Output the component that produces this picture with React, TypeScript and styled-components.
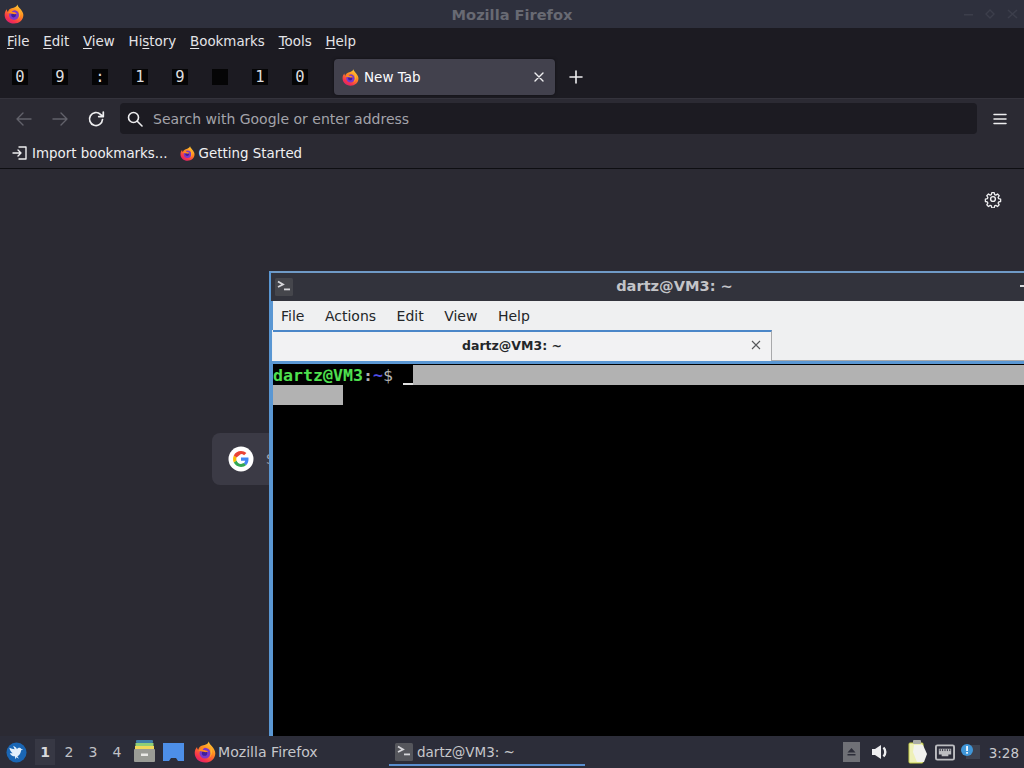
import React from "react";
import styled, { createGlobalStyle } from "styled-components";

const Global = createGlobalStyle`
  html, body { margin: 0; padding: 0; width: 1024px; height: 768px; overflow: hidden; background: #2b2a33; }
  #root { width: 1024px; height: 768px; }
  * { box-sizing: border-box; }
`;

const Desktop = styled.div`
  position: relative; width: 1024px; height: 768px; overflow: hidden;
  display: flex; flex-direction: column;
  font-family: "DejaVu Sans", sans-serif; color: #fbfbfe;
`;
const Browser = styled.div`flex: 1; min-height: 0; display: flex; flex-direction: column;`;
const TitleBar = styled.div`
  height: 28px; flex: none; background: #2e303d; display: flex; align-items: center; justify-content: space-between; padding: 0 5px 0 4px; position: relative;
`;
const TitleText = styled.div`
  position: absolute; left: 0; right: 0; text-align: center; font-size: 14.6px; font-weight: 700; color: #686a73; top: 6px;
`;
const WinButtons = styled.div`display: flex; gap: 11px; padding-right: 1px; color: #3c3e4b; align-items: center;`;
const MenuBar = styled.div`
  height: 27px; flex: none; background: #1c1b22; display: flex; align-items: center; padding: 0 0 0 7px; gap: 13.8px; font-size: 13.4px; color: #e4e4e8;
`;
const MenuItem = styled.span`
  u { text-underline-offset: 2px; text-decoration-thickness: 1px; }
`;
const TabStrip = styled.div`
  height: 43px; flex: none; background: #1c1b22; display: flex; align-items: center; padding-left: 12px;
`;
const Digit = styled.span`
  width: 16px; height: 16px; margin-right: 24px; margin-top: 1px; background: #050506; color: #dcdcdf; display: flex; align-items: center; justify-content: center;
  font-family: "DejaVu Sans Mono", monospace; font-size: 15.500px; line-height: 16px;
`;
const Tab = styled.div`
  width: 221px; height: 36px; margin-left: 2px; margin-top: 1px; background: #42414d; border-radius: 4px; display: flex; align-items: center; padding: 0 10px 0 8px; gap: 5px; font-size: 13.5px; color: #fbfbfe;
  box-shadow: 0 0 3px rgba(0,0,0,.5);
`;
const TabLabel = styled.span`flex: 1;`;
const PlusWrap = styled.span`display: flex; margin-left: 14px; margin-top: 1px;`;
const NavBar = styled.div`
  height: 42px; flex: none; background: #2b2a33; display: flex; align-items: center; padding: 0 0 2px 15px; border-top: 1px solid #34333c;
`;
const NavBtn = styled.span`width: 36px; display: flex; height: 18px; align-items: center; flex: none;`;
const UrlBar = styled.div`
  width: 857px; height: 31px; margin-left: -3px; background: #1c1b22; border-radius: 4px; display: flex; align-items: center; padding-left: 7px; gap: 10px; font-size: 14px; color: #a3a3aa; flex: none;
`;
const Burger = styled.span`display: flex; margin-left: 16px;`;
const BookmarkBar = styled.div`
  height: 29px; flex: none; background: #2b2a33; display: flex; align-items: center; padding: 0 0 2px 12px; font-size: 13.4px; color: #f0f0f2; border-bottom: 1px solid #0e0e12;
`;
const Bookmark = styled.span`display: flex; align-items: center; gap: 4px; margin-right: 12px;`;
const Content = styled.div`
  flex: 1; min-height: 0; background: #2b2a33; display: flex; flex-direction: column; align-items: center; padding-top: 21px;
`;
const GearRow = styled.div`align-self: stretch; display: flex; justify-content: flex-end; padding-right: 22px;`;
const SearchBox = styled.div`
  width: 600px; height: 52px; margin-top: 225px; background: #3b3a45; border-radius: 8px; display: flex; align-items: center; padding-left: 16px; gap: 12px; font-size: 14px; color: #a3a3aa; flex: none;
`;
const Terminal = styled.div`
  position: absolute; left: 269px; top: 271px; width: 800px; height: 465px; display: flex; flex-direction: column;
  border-left: 4px solid #5a97d3; border-top: 2px solid #6f9ac6; background: #000;
`;
const TermTitle = styled.div`
  height: 28px; flex: none; background: #32333c; margin-left: -2px; display: flex; align-items: center; padding-left: 4px; position: relative; font-size: 14.6px; font-weight: 700; color: #c3c4c8;
`;
const TermTitleText = styled.span`position: absolute; left: 0; top: 4px; width: 807px; text-align: center;`;
const TermMin = styled.span`position: absolute; left: 749px; top: 12px; width: 12px; height: 2px; background: #d8d8dc;`;
const TermMenu = styled.div`
  height: 29px; flex: none; background: #eff0f1; display: flex; align-items: center; padding-left: 8px; gap: 20.5px; font-size: 14px; color: #232629;
`;
const TabRow = styled.div`
  height: 34px; flex: none; background: #eff0f1; display: flex; align-items: stretch; border-bottom: 3px solid #5a97d3; margin-left: -1px; padding-left: 1px;
`;
const TermTab = styled.div`
  width: 499px; background: #f2f2f3; border-top: 2px solid #4b87c8; border-right: 1px solid #a8a9ab; display: flex; align-items: center; justify-content: center; padding: 0 20px 3px 0; position: relative; font-size: 12.5px; font-weight: 700; color: #232629;
`;
const TabClose = styled.span`position: absolute; right: 9px; top: 7px; display: flex;`;
const TabFiller = styled.div`flex: 1; border-bottom: 1px solid #a8a9ab;`;
const TermBody = styled.div`
  flex: 1; background: #000; padding-top: 1px; font-family: "DejaVu Sans Mono", monospace; font-size: 16.6px; line-height: 20px; font-weight: 400;
`;
const TermLine = styled.div`display: flex; height: 20px; width: 100%;`;
const Prompt = styled.span`display: inline-flex; color: #b2b2b2; white-space: pre; line-height: 22px;`;
const GreenText = styled.span`color: #4fe04f; font-weight: 700;`;
const Tilde = styled.span`color: #5050e8; font-weight: 700;`;
const Colon = styled.span`color: #b2b2b2; font-weight: 700;`;
const Cursor = styled.span`width: 10px; margin-left: 10px; border-bottom: 2px solid #e0e0e0; height: 20px;`;
const Selection = styled.span<{ $w?: number }>`
  background: #b2b2b2; height: 20px; ${(p) => (p.$w ? `width: ${p.$w}px;` : "flex: 1;")}
`;
const Taskbar = styled.div`
  height: 32px; flex: none; background: #2c2d39; display: flex; align-items: center; font-size: 14px; color: #c6c7cb; position: relative;
`;
const StartBtn = styled.span`display: flex; margin-left: 6px; margin-right: 8px;`;
const Workspace = styled.span<{ $on?: boolean }>`
  width: 20px; height: 26px; margin-right: 4px; display: flex; align-items: center; justify-content: center; font-size: 14px;
  background: ${(p) => (p.$on ? "#373844" : "transparent")}; font-weight: ${(p) => (p.$on ? 700 : 400)}; color: ${(p) => (p.$on ? "#d8d8dc" : "#c0c1c6")};
`;
const Launchers = styled.span`display: flex; align-items: center; gap: 8px; margin: 0 10px 0 3px;`;
const Task = styled.div<{ $active?: boolean; $w: number; $size: number }>`
  height: 30px; width: ${(p) => p.$w}px; align-self: flex-start; display: flex; align-items: center; gap: 2px; padding-top: 4px; flex: none; font-size: ${(p) => p.$size}px;
  border-bottom: 2px solid ${(p) => (p.$active ? "#5a8fd0" : "transparent")};
`;
const TaskTermPad = styled.span`display: flex; margin-left: 6px; margin-right: 2px;`;
const Tray = styled.div`margin-left: auto; display: flex; align-items: center; padding-right: 5px; font-size: 13.5px;`;
const TrayItem = styled.span<{ $gap: number }>`display: flex; margin-right: ${(p) => p.$gap}px;`;
const Clock = styled.span`color: #c9cace; padding-top: 1px;`;

const Firefox = ({ size = 18 }: { size?: number }) => {
  const id = `ff${size}`;
  return (
    <svg width={size} height={size} viewBox="0.5 0.5 23 23.500">
      <defs>
        <linearGradient id={`${id}a`} x1="0.8" y1="0" x2="0.2" y2="1">
          <stop offset="0" stopColor="#ffd23a" />
          <stop offset="0.4" stopColor="#ff8a1f" />
          <stop offset="0.8" stopColor="#f5304e" />
          <stop offset="1" stopColor="#d41f78" />
        </linearGradient>
      </defs>
      <path d="M16 1c.6 2.6 2 3.4 3.6 5.4C21.400 8.500 23 11 23 13.500 23 19.600 18 23.500 12 23.500S1 19.300 1 13.300c0-2.700 1.100-5 2.500-6.500.1 1.400.5 2.300 1.300 3C5.300 7.600 7 6 9.200 5.400 12.500 4.500 15.300 3.800 16 1z" fill={`url(#${id}a)`} />
      <circle cx="12" cy="13.500" r="5.800" fill="#7a38c9" />
      <circle cx="11.500" cy="13.500" r="2.800" fill="#3f1f9a" />
      <path d="M5 11c2-3 5-4 8-3.500-1.500.3-3 1-3.500 2.500 2.500 0 5 .5 6 2-1-.2-2 0-2.500.5L5 11z" fill="#ff8a1f" />
      <path d="M18.500 7.500C20 10 20 14 18 17c-.5.800-1.500 2-3 2.500 2-.5 3-3 3-5.500s-.5-4.500.5-6.500z" fill="#ffb52e" />
    </svg>
  );
};

const Stroke = styled.svg`fill: none; stroke: currentColor; stroke-width: 1.400; stroke-linecap: round; stroke-linejoin: round; display: block;`;
const Dim = styled(Stroke)`color: #62626b;`;
const Bright = styled(Stroke)`color: #eeeef0;`;

const TermGlyph = ({ size = 18, bg = "transparent" }: { size?: number; bg?: string }) => (
  <svg width={size} height={size} viewBox="0 0 18 18">
    <rect width="18" height="18" rx="1.500" fill={bg} />
    <path d="M3 3.500 L8 6.500 L3 9" fill="none" stroke="#d6d6da" strokeWidth="1.800" />
    <rect x="9" y="10.500" width="6" height="1.800" fill="#d6d6da" />
  </svg>
);

const Gear = () => (
  <Bright width="18" height="18" viewBox="0 0 24 24">
    <circle cx="12" cy="12" r="3.200" strokeWidth="1.900" />
    <path strokeWidth="1.900" d="M10.200 2.500h3.600l.6 2.900 1.800.8 2.500-1.600 2.500 2.600-1.600 2.400.8 1.900 2.900.6v3.600l-2.900.6-.8 1.800 1.600 2.500-2.500 2.500-2.500-1.600-1.800.8-.6 2.900h-3.600l-.6-2.900-1.800-.8-2.500 1.600-2.500-2.500 1.600-2.500-.8-1.800-2.900-.6v-3.600l2.900-.6.8-1.900-1.600-2.400 2.500-2.600 2.500 1.600 1.800-.8z" transform="translate(1.200 1.200) scale(.9)" />
  </Bright>
);

const GoogleG = () => (
  <svg width="26" height="26" viewBox="0 0 26 26">
    <circle cx="13" cy="13" r="12.500" fill="#fff" />
    <path d="M20.500 13.200c0-.6 0-1.100-.1-1.600H13v3.100h4.200c-.2 1-.8 1.900-1.700 2.500l2.600 2c1.500-1.400 2.400-3.500 2.400-6z" fill="#4285f4" />
    <path d="M13 21c2.200 0 4-.7 5.100-1.900l-2.600-2c-.7.500-1.500.8-2.500.8-2.100 0-3.900-1.400-4.500-3.400L5.800 16.600C7.100 19.200 9.900 21 13 21z" fill="#34a853" />
    <path d="M8.500 14.500c-.3-1-.3-2 0-3L5.800 9.400c-1 2-1 5.100 0 7.200l2.700-2.100z" fill="#fbbc05" />
    <path d="M13 8.100c1.200 0 2.300.4 3.100 1.200l2.300-2.300C17 5.800 15.200 5 13 5 9.900 5 7.100 6.800 5.800 9.400l2.700 2.100z" fill="#ea4335" />
  </svg>
);

const Dove = () => (
  <svg width="21" height="21" viewBox="0 0 22 22">
    <circle cx="11" cy="11" r="10.500" fill="#1a66b4" />
    <path d="M3.500 6c1.800 1 3.600 1.500 5.500 1.500L7.500 4c2 .8 3.400 2 4 3.500.6-1.200 1.800-1.800 3-1.500.8.200 1.300.8 1.500 1.300l2 .7-2.200.6c-.2 2.500-1.400 5-3.800 6.400l1.500 2.500-2.500-1.400-1.200 1.900-.5-3c-2.500 0-4.500-1.200-5.300-3.500 1 .4 2 .5 3 .3C5.300 10.600 4 8.500 3.500 6z" fill="#e4f0fb" />
  </svg>
);

const Cabinet = () => (
  <svg width="21" height="24" viewBox="0 0 21 24">
    <rect x="2" y="0" width="17" height="3" rx="1" fill="#3f7fa8" />
    <rect x="1.500" y="3" width="18" height="4" fill="#8fcf78" />
    <rect x="1" y="6" width="19" height="3" fill="#f0d95a" />
    <rect x="0" y="9" width="21" height="13" rx="1" fill="#9a9c96" />
    <rect x="7" y="13.500" width="7" height="2.500" fill="#e9e9e6" />
  </svg>
);

const Folder = () => (
  <svg width="21" height="18" viewBox="0 0 21 18">
    <path d="M0 0h21v18h-6l-2-3H8l-2 3H0z" fill="#4d8fe8" />
  </svg>
);

const Network = () => (
  <svg width="20" height="17" viewBox="0 0 21 17">
    <rect x="1" y="1" width="19" height="15" rx="1.500" fill="#2c2d39" stroke="#bcbdc0" strokeWidth="2" />
    <path d="M4 4.500h13v6h-3v2H7v-2H4z" fill="#bcbdc0" />
    <path d="M5.500 5v2M8 5v2M10.500 5v2M13 5v2M15.500 5v2" stroke="#2c2d39" />
  </svg>
);

const Clipboard = () => (
  <svg width="20" height="24" viewBox="0 0 20 24">
    <rect x="1" y="3" width="14" height="20" rx="1" fill="#eef0b8" stroke="#c9d24a" />
    <rect x="5" y="0" width="8" height="4" rx="1" fill="#a9aaa6" />
    <path d="M6 5h9l4 9-3 8H9L5 12z" fill="#f2f2ee" />
  </svg>
);

const Notify = () => (
  <svg width="20" height="18" viewBox="0 0 20 18">
    <rect x="6" y="2" width="14" height="14" fill="#3d4250" />
    <circle cx="7" cy="7" r="6" fill="#3f96d8" />
    <rect x="6.200" y="3" width="1.700" height="5" fill="#fff" />
    <rect x="6.200" y="9" width="1.700" height="1.700" fill="#fff" />
  </svg>
);

const digits = ["0", "9", ":", "1", "9", "", "1", "0"];

export default function App() {
  return (
    <Desktop>
      <Global />
      <Browser>
        <TitleBar>
          <Firefox size={20} />
          <TitleText>Mozilla Firefox</TitleText>
          <WinButtons>
            <svg width="10" height="10" viewBox="0 0 10 10"><rect y="5" width="9" height="1.500" fill="currentColor" /></svg>
            <svg width="11" height="10" viewBox="0 0 11 10"><path d="M1 5l4-4 4 4-4 4z" fill="none" stroke="currentColor" strokeWidth="1.400" /></svg>
            <svg width="11" height="10" viewBox="0 0 11 10"><path d="M1 1l9 8M10 1l-9 8" stroke="currentColor" strokeWidth="1.600" /></svg>
          </WinButtons>
        </TitleBar>
        <MenuBar>
          <MenuItem><u>F</u>ile</MenuItem>
          <MenuItem><u>E</u>dit</MenuItem>
          <MenuItem><u>V</u>iew</MenuItem>
          <MenuItem>Hi<u>s</u>tory</MenuItem>
          <MenuItem><u>B</u>ookmarks</MenuItem>
          <MenuItem><u>T</u>ools</MenuItem>
          <MenuItem><u>H</u>elp</MenuItem>
        </MenuBar>
        <TabStrip>
          {digits.map((d, i) => (
            <Digit key={i}>{d}</Digit>
          ))}
          <Tab>
            <Firefox size={17} />
            <TabLabel>New Tab</TabLabel>
            <Bright width="12" height="12" viewBox="0 0 12 12"><path d="M2 2l8 8M10 2l-8 8" /></Bright>
          </Tab>
          <PlusWrap>
            <Bright width="14" height="14" viewBox="0 0 14 14"><path d="M7 1v12M1 7h12" strokeWidth="1.600" /></Bright>
          </PlusWrap>
        </TabStrip>
        <NavBar>
          <NavBtn>
            <Dim width="18" height="18" viewBox="0 0 18 18"><path d="M16 9H2M8 3L2 9l6 6" /></Dim>
          </NavBtn>
          <NavBtn>
            <Dim width="18" height="18" viewBox="0 0 18 18"><path d="M2 9h14M10 3l6 6-6 6" /></Dim>
          </NavBtn>
          <NavBtn>
            <Bright width="18" height="18" viewBox="0 0 18 18"><path d="M15.500 9.500A6.500 6.500 0 1 1 13.500 4.300L16 6.500M16.300 2v4.600h-4.600" strokeWidth="1.700" /></Bright>
          </NavBtn>
          <UrlBar>
            <Bright width="16" height="16" viewBox="0 0 16 16"><circle cx="6.500" cy="6.500" r="5" strokeWidth="1.600" /><path d="M10.500 10.500L15 15" strokeWidth="1.600" /></Bright>
            <span>Search with Google or enter address</span>
          </UrlBar>
          <Burger>
            <Bright width="14" height="14" viewBox="0 0 14 14"><path d="M1 2.500h12M1 7h12M1 11.500h12" strokeWidth="1.500" /></Bright>
          </Burger>
        </NavBar>
        <BookmarkBar>
          <Bookmark>
            <Bright width="16" height="16" viewBox="0 0 16 16"><path d="M7 2h7v12H7M6 5l3 3-3 3M1 8h8M1 8h1" /></Bright>
            <span>Import bookmarks...</span>
          </Bookmark>
          <Bookmark>
            <Firefox size={15} />
            <span>Getting Started</span>
          </Bookmark>
        </BookmarkBar>
        <Content>
          <GearRow><Gear /></GearRow>
          <SearchBox>
            <GoogleG />
            <span>Search with Google or enter address</span>
          </SearchBox>
        </Content>
      </Browser>
      <Taskbar>
        <StartBtn><Dove /></StartBtn>
        <Workspace $on>1</Workspace>
        <Workspace>2</Workspace>
        <Workspace>3</Workspace>
        <Workspace>4</Workspace>
        <Launchers>
          <Cabinet />
          <Folder />
        </Launchers>
        <Task $w={195} $size={14.1}>
          <Firefox size={22} />
          <span>Mozilla Firefox</span>
        </Task>
        <Task $active $w={196} $size={13.5}>
          <TaskTermPad><TermGlyph bg="#55565c" /></TaskTermPad>
          <span>dartz@VM3: ~</span>
        </Task>
        <Tray>
          <TrayItem $gap={11}>
            <svg width="17" height="20" viewBox="0 0 17 20"><rect width="17" height="20" fill="#6f7076" /><path d="M8.500 6l4 4.500h-8zM4.500 12h8v1.500h-8z" fill="#2c2d39" /></svg>
          </TrayItem>
          <TrayItem $gap={19}>
            <svg width="18" height="16" viewBox="0 0 18 16"><path d="M1 5h3l6-4v14l-6-4H1z" fill="#eeeef0" /><path d="M12.500 3.500c2.400 2.500 2.400 6.500 0 9" fill="none" stroke="#eeeef0" strokeWidth="2.400" /></svg>
          </TrayItem>
          <TrayItem $gap={7}><Clipboard /></TrayItem>
          <TrayItem $gap={5}><Network /></TrayItem>
          <TrayItem $gap={9}><Notify /></TrayItem>
          <Clock>3:28</Clock>
        </Tray>
      </Taskbar>
      <Terminal>
        <TermTitle>
          <TermGlyph size={18} bg="#45464c" />
          <TermTitleText>dartz@VM3: ~</TermTitleText>
          <TermMin />
        </TermTitle>
        <TermMenu>
          <span>File</span>
          <span>Actions</span>
          <span>Edit</span>
          <span>View</span>
          <span>Help</span>
        </TermMenu>
        <TabRow>
          <TermTab>
            dartz@VM3: ~
            <TabClose>
              <svg width="12" height="12" viewBox="0 0 12 12"><path d="M2 2l8 8M10 2l-8 8" stroke="#55575a" strokeWidth="1.100" /></svg>
            </TabClose>
          </TermTab>
          <TabFiller />
        </TabRow>
        <TermBody>
          <TermLine>
            <Prompt><GreenText>dartz@VM3</GreenText><Colon>:</Colon><Tilde>~</Tilde>$</Prompt>
            <Cursor />
            <Selection />
          </TermLine>
          <TermLine>
            <Selection $w={70} />
          </TermLine>
        </TermBody>
      </Terminal>
    </Desktop>
  );
}
